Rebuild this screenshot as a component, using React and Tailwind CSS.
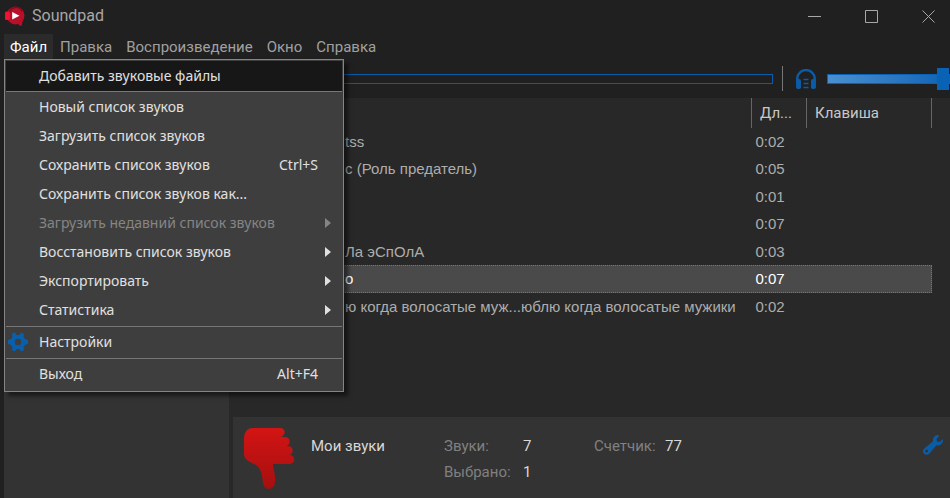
import React from "react";

// Entries of the opened "Файл" menu, grouped between the dividers
const menuGroups = [
  [
    { label: "Новый список звуков" },
    { label: "Загрузить список звуков" },
    { label: "Сохранить список звуков", shortcut: "Ctrl+S" },
    { label: "Сохранить список звуков как..." },
    { label: "Загрузить недавний список звуков", submenu: true, disabled: true },
    { label: "Восстановить список звуков", submenu: true },
    { label: "Экспортировать", submenu: true },
    { label: "Статистика", submenu: true },
  ],
  [{ label: "Настройки", icon: true }],
  [{ label: "Выход", shortcut: "Alt+F4" }],
];

const sounds = [
  { title: "tss", length: "0:02" },
  { title: "с (Роль предатель)", length: "0:05" },
  { title: "", length: "0:01" },
  { title: "", length: "0:07" },
  { title: "Ла эСпОлА", length: "0:03" },
  { title: "о", length: "0:07", selected: true },
  { title: "ю когда волосатые муж...юблю когда волосатые мужики", length: "0:02" },
];

const LogoIcon = () => (
  <svg className="h-5 w-5 shrink-0" viewBox="0 0 20 20">
    <circle cx="10.5" cy="9.5" r="9" fill="#b80f2a" />
    <path d="M12 17l6-3.500L17.500 16 16.500 20l-2-.5z" fill="#b80f2a" />
    <path d="M4.500 14V8a6.500 6.500 0 0 1 12.500-2.500" fill="none" stroke="#86081b" strokeWidth="1.200" />
    <rect x="0" y="5.500" width="5" height="8.500" rx="1.500" fill="#f0122f" />
    <path d="M7.200 6v7.500l7.300-3.700z" fill="#fff" />
  </svg>
);

const GearIcon = () => (
  <svg className="h-5 w-5" viewBox="0 0 20 20" fill="#0a5fac">
    <path
      fillRule="evenodd"
      d="M4 1.500L7 .5L8.500 3h3L13 .5l3 1.200-.3 3.300 1.500 2.300 2.800.7v4l-2.800.7-1.500 2.300.3 3.300-3 1.200-1.500-2.500h-3L7 19.500l-3-1.200.3-3.300-1.500-2.300L0 12V8l2.800-.7L4.300 5zM10 6.800a3.200 3.200 0 1 0 0 6.400 3.200 3.200 0 0 0 0-6.400z"
    />
  </svg>
);

const HeadphonesIcon = () => (
  <svg className="h-5 w-5 shrink-0" viewBox="0 0 20 20" fill="none" stroke="#0a5ca6">
    <path d="M1.300 15V9.300a8.700 8.200 0 0 1 17.400 0V15" strokeWidth="2.400" />
    <rect x=".1" y="10" width="4.900" height="10" rx="1.800" fill="#0a5ca6" stroke="none" />
    <rect x="15" y="10" width="4.900" height="10" rx="1.800" fill="#0a5ca6" stroke="none" />
    <path d="M7.500 10.500h5M7.500 14.500h5M7.500 18.500h5" strokeWidth="1.300" />
  </svg>
);

const ThumbDownIcon = () => (
  <svg className="h-[61px] w-[51px] shrink-0" viewBox="0 0 51 61">
    <defs>
      <linearGradient id="thumb" x1="0" y1="0" x2="0" y2="1">
        <stop offset="0" stopColor="#d31414" />
        <stop offset="1" stopColor="#a50f0f" />
      </linearGradient>
    </defs>
    <path
      fill="url(#thumb)"
      d="M9 0H36c6 0 6 7 1 9h4c6 0 6 8 1 9h2c6 0 6 8 1 9 7 0 7 9 0 9H29c0 5 3 12 2 18-1 9-11 9-12 1-1-9-2-14-7-18C6 34 0 32 0 26V11C0 4 3 0 9 0z"
    />
  </svg>
);

const WrenchIcon = () => (
  <svg className="h-5 w-5" viewBox="0 0 20 20" fill="#0a5ca6">
    <path
      fillRule="evenodd"
      d="M16.500.5l-3 3.500.5 2.500L16.500 7l3.500-3c.6 4-2.500 7-6.500 6.300L6.500 18.500c-3 3-8.500 0-6-4 1-1.300 5-4.500 9.500-8.300C9.500 2 12.500-.7 16.500.5zM3.700 14.700a1.400 1.400 0 1 0 0 2.800 1.400 1.400 0 0 0 0-2.800z"
    />
  </svg>
);

const MenuItem = ({ item }) => (
  <li>
    <button
      disabled={item.disabled}
      className="relative flex h-[29px] w-full items-center pr-2 pl-[33px] text-left text-[#e0e0e0] disabled:text-[#858585]"
    >
      {item.icon && (
        <span className="absolute left-[2px]">
          <GearIcon />
        </span>
      )}
      <span className="flex-1">{item.label}</span>
      {item.shortcut && <span className="mr-4">{item.shortcut}</span>}
      {item.submenu && (
        <svg className="mr-[3px] h-[10px] w-[6px]" viewBox="0 0 6 10" fill="currentColor">
          <path d="M0 0l6 5-6 5z" />
        </svg>
      )}
    </button>
  </li>
);

const FileMenu = () => (
  <div className="absolute top-full left-0 z-10 w-[340px] border border-[#858585] bg-[#3e3e3e] p-px font-['Noto_Sans',sans-serif] text-sm shadow-[4px_4px_4px_rgba(0,0,0,0.5)]">
    <button className="flex h-[30px] w-full items-center bg-[#171717] pl-[33px] text-[#e0e0e0]">
      Добавить звуковые файлы
    </button>
    {menuGroups.map((group, i) => (
      <ul key={i} className="border-t border-[#777777] pb-[2px]">
        {group.map((item) => (
          <MenuItem key={item.label} item={item} />
        ))}
      </ul>
    ))}
  </div>
);

const TitleBar = () => (
  <header className="flex h-[34px] items-center justify-between pr-[15px] pb-[2px] pl-[5px] text-[#a8a8a8]">
    <div className="flex items-center gap-[7px]">
      <LogoIcon />
      <h1 className="text-base">Soundpad</h1>
    </div>
    <div className="flex gap-[44px]">
      <button aria-label="Свернуть">
        <svg className="h-[13px] w-[13px]" viewBox="0 0 13 13" stroke="currentColor">
          <path d="M0 6.500h13" />
        </svg>
      </button>
      <button aria-label="Развернуть">
        <svg className="h-[13px] w-[13px]" viewBox="0 0 13 13" fill="none" stroke="currentColor">
          <path d="M.5.5h12v12H.5z" />
        </svg>
      </button>
      <button aria-label="Закрыть">
        <svg className="h-[13px] w-[13px]" viewBox="0 0 13 13" stroke="currentColor">
          <path d="M.5.5l12 12M12.500.5l-12 12" />
        </svg>
      </button>
    </div>
  </header>
);

const MenuBar = () => (
  <nav className="relative ml-1 flex h-[25px] text-[#a0a0a0]">
    <button className="bg-[#2b2b2b] px-[6px] text-white">Файл</button>
    <button className="px-[7px]">Правка</button>
    <button className="px-[7px]">Воспроизведение</button>
    <button className="px-[7px]">Окно</button>
    <button className="px-[7px]">Справка</button>
    <FileMenu />
  </nav>
);

const Toolbar = () => (
  <div className="flex h-[39px] items-center">
    <div className="ml-2 h-[10px] flex-1 border border-[#0a5ca6]" />
    <div className="ml-[9px] h-[25px] w-px bg-[#777777]" />
    <div className="ml-[13px]">
      <HeadphonesIcon />
    </div>
    <input
      type="range"
      aria-label="Громкость"
      defaultValue="100"
      className="ml-[11px] h-[22px] w-[123px] appearance-none bg-transparent [&::-webkit-slider-runnable-track]:h-[10px] [&::-webkit-slider-runnable-track]:border [&::-webkit-slider-runnable-track]:border-[#0a62b5] [&::-webkit-slider-runnable-track]:bg-linear-to-r [&::-webkit-slider-runnable-track]:from-[#4a90d0] [&::-webkit-slider-runnable-track]:to-[#0a62b5] [&::-webkit-slider-thumb]:-mt-[7px] [&::-webkit-slider-thumb]:h-[22px] [&::-webkit-slider-thumb]:w-[12px] [&::-webkit-slider-thumb]:appearance-none [&::-webkit-slider-thumb]:bg-[#0a62b5]"
    />
  </div>
);

const SoundTable = () => (
  <div className="flex-1 pr-[18px]">
    <table className="w-full table-fixed border-collapse text-left">
      <colgroup>
        <col />
        <col className="w-[55px]" />
        <col className="w-[125px]" />
      </colgroup>
      <thead>
        <tr className="h-[30px] text-[#c8c8c8]">
          <th />
          <th className="border-l border-[#666666] pl-2 font-normal">Дл...</th>
          <th className="border-x border-[#666666] pl-2 font-normal">Клавиша</th>
        </tr>
      </thead>
      <tbody className="font-['Liberation_Sans',sans-serif] text-[#adadad]">
        {sounds.map((sound, i) => (
          <tr
            key={i}
            className={
              sound.selected
                ? "h-[28px] bg-[#4a4a4a] text-white outline-1 -outline-offset-1 outline-dotted outline-[#777777]"
                : "odd:h-[27px] even:h-[28px]"
            }
          >
            <td className="truncate pl-[112px]">{sound.title}</td>
            <td className="pl-1">{sound.length}</td>
            <td />
          </tr>
        ))}
      </tbody>
    </table>
  </div>
);

const CategoryPanel = () => (
  <footer className="flex h-[81px] bg-[#333333] pt-[11px] pr-[7px] pl-[11px]">
    <ThumbDownIcon />
    <h2 className="mt-[6px] ml-4 w-[133px] text-[#d8d8d8]">Мои звуки</h2>
    <dl className="mt-[6px] grid grid-cols-[79px_71px_71px_40px] content-start gap-y-[2px] text-[#808080]">
      <dt>Звуки:</dt>
      <dd className="text-[#d8d8d8]">7</dd>
      <dt>Счетчик:</dt>
      <dd className="text-[#d8d8d8]">77</dd>
      <dt>Выбрано:</dt>
      <dd className="text-[#d8d8d8]">1</dd>
    </dl>
    <button aria-label="Инструменты" className="mt-[7px] ml-auto self-start">
      <WrenchIcon />
    </button>
  </footer>
);

const App = () => {
  return (
    <div className="flex min-h-screen flex-col bg-[#202020] font-[Roboto,sans-serif] text-[15px] leading-6">
      <TitleBar />
      <MenuBar />
      <Toolbar />
      <main className="ml-1 flex flex-1 bg-[#282828]">
        <aside className="w-[225px] bg-[#333333]" />
        <section className="ml-1 flex min-w-0 flex-1 flex-col">
          <SoundTable />
          <CategoryPanel />
        </section>
      </main>
    </div>
  );
};

export default App;
